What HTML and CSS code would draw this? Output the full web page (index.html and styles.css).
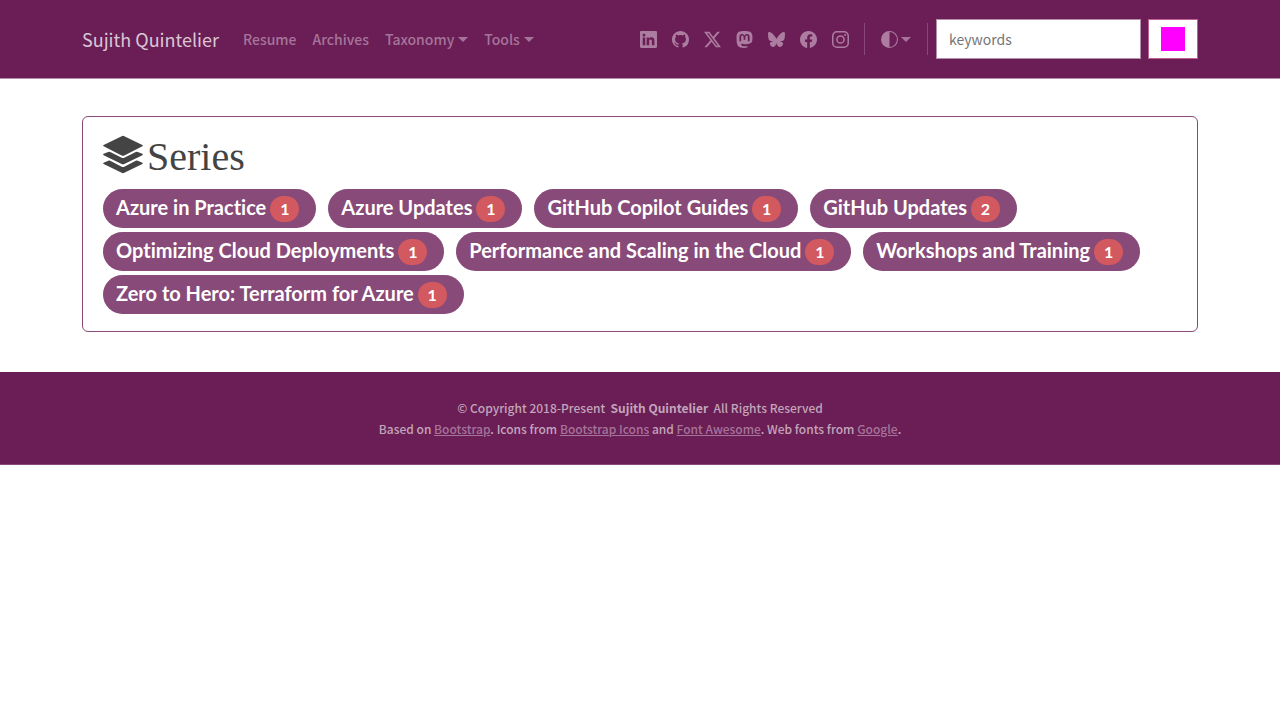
FILE: index.html
```html
<!DOCTYPE html>
<html lang="en">
<head>
<meta charset="utf-8">
<meta name="viewport" content="width=device-width, initial-scale=1">
<title>Series - Sujith Quintelier</title>
<link rel="stylesheet" href="styles.css">
</head>
<body>
<header class="site-header">
  <nav class="container navbar">
    <a class="brand" href="#">Sujith Quintelier</a>
    <ul class="menu">
      <li><a class="nav-link" href="#">Resume</a></li>
      <li><a class="nav-link" href="#">Archives</a></li>
      <li><button class="nav-link caret" type="button">Taxonomy</button></li>
      <li><button class="nav-link caret" type="button">Tools</button></li>
    </ul>
    <div class="social">
      <a href="#" aria-label="LinkedIn"><svg class="icon" viewBox="0 0 16 16"><path d="M0 1.146C0 .513.526 0 1.175 0h13.65C15.474 0 16 .513 16 1.146v13.708c0 .633-.526 1.146-1.175 1.146H1.175C.526 16 0 15.487 0 14.854zm4.943 12.248V6.169H2.542v7.225zm-1.2-8.212c.837 0 1.358-.554 1.358-1.248-.015-.709-.52-1.248-1.342-1.248S2.4 3.226 2.4 3.934c0 .694.521 1.248 1.327 1.248zm4.908 8.212V9.359c0-.216.016-.432.08-.586.173-.431.568-.878 1.232-.878.869 0 1.216.662 1.216 1.634v3.865h2.401V9.25c0-2.22-1.184-3.252-2.764-3.252-1.274 0-1.845.7-2.165 1.193v.025h-.016l.016-.025V6.169h-2.4c.03.678 0 7.225 0 7.225z"/></svg></a>
      <a href="#" aria-label="GitHub"><svg class="icon" viewBox="0 0 16 16"><path d="M8 0C3.58 0 0 3.58 0 8c0 3.54 2.29 6.53 5.47 7.59.4.07.55-.17.55-.38 0-.19-.01-.82-.01-1.49-2.01.37-2.53-.49-2.69-.94-.09-.23-.48-.94-.82-1.13-.28-.15-.68-.52-.01-.53.63-.01 1.08.58 1.23.82.72 1.21 1.87.87 2.33.66.07-.52.28-.87.51-1.07-1.78-.2-3.64-.89-3.64-3.95 0-.87.31-1.59.82-2.15-.08-.2-.36-1.02.08-2.12 0 0 .67-.21 2.2.82.64-.18 1.32-.27 2-.27s1.36.09 2 .27c1.53-1.04 2.2-.82 2.2-.82.44 1.1.16 1.92.08 2.12.51.56.82 1.27.82 2.15 0 3.07-1.87 3.75-3.65 3.95.29.25.54.73.54 1.48 0 1.07-.01 1.93-.01 2.2 0 .21.15.46.55.38A8.01 8.01 0 0 0 16 8c0-4.42-3.58-8-8-8"/></svg></a>
      <a href="#" aria-label="X"><svg class="icon" viewBox="0 0 16 16"><path d="M12.6.75h2.454l-5.36 6.142L16 15.25h-4.937l-3.867-5.07-4.425 5.07H.316l5.733-6.57L0 .75h5.063l3.495 4.633L12.601.75Zm-.86 13.028h1.36L4.323 2.145H2.865z"/></svg></a>
      <a href="#" aria-label="Mastodon"><svg class="icon" viewBox="0 0 16 16"><path d="M11.19 12.195c2.016-.24 3.77-1.475 3.99-2.603.348-1.778.32-4.339.32-4.339 0-3.47-2.286-4.488-2.286-4.488C12.062.238 10.083.017 8.027 0h-.05C5.92.017 3.942.238 2.79.765c0 0-2.285 1.017-2.285 4.488l-.002.662c-.004.64-.007 1.35.011 2.091.083 3.394.626 6.74 3.78 7.57 1.454.383 2.703.463 3.709.408 1.823-.1 2.847-.647 2.847-.647l-.06-1.317s-1.303.41-2.767.36c-1.45-.05-2.98-.156-3.215-1.928a4 4 0 0 1-.033-.496s1.424.346 3.228.428c1.103.05 2.137-.064 3.188-.189zm1.613-2.47H11.13v-4.08c0-.859-.364-1.295-1.091-1.295-.804 0-1.207.517-1.207 1.541v2.233H7.168V5.89c0-1.024-.403-1.541-1.207-1.541-.727 0-1.091.436-1.091 1.296v4.079H3.197V5.522q0-1.288.66-2.046c.456-.505 1.052-.764 1.793-.764.856 0 1.504.328 1.933.983L8 4.39l.417-.695c.429-.655 1.077-.983 1.934-.983.74 0 1.336.259 1.791.764q.662.757.661 2.046z"/></svg></a>
      <a href="#" aria-label="Bluesky"><svg class="icon" viewBox="0 0 16 16"><path d="M3.468 1.948C5.303 3.325 7.276 6.118 8 7.616c.725-1.498 2.698-4.29 4.532-5.668C13.855.955 16 .186 16 2.632c0 .489-.28 4.105-.444 4.692-.572 2.04-2.653 2.561-4.504 2.246 3.236.551 4.06 2.375 2.281 4.2-3.376 3.464-4.852-.87-5.23-1.98-.07-.204-.103-.3-.103-.218 0-.081-.033.014-.102.218-.379 1.11-1.855 5.444-5.231 1.98-1.778-1.825-.955-3.65 2.28-4.2-1.85.315-3.932-.205-4.503-2.246C.28 6.737 0 3.12 0 2.632 0 .186 2.145.955 3.468 1.948"/></svg></a>
      <a href="#" aria-label="Facebook"><svg class="icon" viewBox="0 0 16 16"><path d="M16 8.049c0-4.446-3.582-8.05-8-8.05C3.58 0-.002 3.603-.002 8.05c0 4.017 2.926 7.347 6.75 7.951v-5.625h-2.03V8.05H6.75V6.275c0-2.017 1.195-3.131 3.022-3.131.876 0 1.791.157 1.791.157v1.98h-1.009c-.993 0-1.303.621-1.303 1.258v1.51h2.218l-.354 2.326H9.25V16c3.824-.604 6.75-3.934 6.75-7.951"/></svg></a>
      <a href="#" aria-label="Instagram"><svg class="icon" viewBox="0 0 16 16"><path fill-rule="evenodd" d="M4.7 0h6.6A4.7 4.7 0 0 1 16 4.7v6.6a4.7 4.7 0 0 1-4.7 4.7H4.7A4.7 4.7 0 0 1 0 11.3V4.7A4.7 4.7 0 0 1 4.7 0m.1 1.44A3.36 3.36 0 0 0 1.44 4.8v6.4a3.36 3.36 0 0 0 3.36 3.36h6.4a3.36 3.36 0 0 0 3.36-3.36V4.8a3.36 3.36 0 0 0-3.36-3.36zM12.27 2.77a.96.96 0 1 1 0 1.92.96.96 0 0 1 0-1.92M8 3.89a4.11 4.11 0 1 1 0 8.22 4.11 4.11 0 0 1 0-8.22m0 1.44a2.67 2.67 0 1 0 0 5.34 2.67 2.67 0 0 0 0-5.34"/></svg></a>
    </div>
    <span class="divider"></span>
    <button class="nav-link caret theme" type="button" aria-label="Toggle theme"><svg class="icon" viewBox="0 0 16 16"><path d="M8 15A7 7 0 1 0 8 1zm0 1A8 8 0 1 1 8 0a8 8 0 0 1 0 16"/></svg></button>
    <span class="divider"></span>
    <form class="search">
      <input class="search-input" type="search" placeholder="keywords" aria-label="Search keywords">
      <button class="search-button" type="button" aria-label="Search"><span class="swatch"></span></button>
    </form>
  </nav>
</header>
<main class="container content">
  <section class="card">
    <h1 class="title"><svg class="layers" viewBox="0 0 122 116"><path d="M57 2Q61 0 65 2L120 29Q123 31 120 33L65 61Q61 63 57 61L2 33Q-1 31 2 29zM2 56L16 50Q19 49 22 50L57 68Q61 70 65 68L100 50Q103 49 106 50L120 56Q123 58 120 60L65 87Q61 89 57 87L2 60Q-1 58 2 56zM2 83L16 77Q19 76 22 77L57 95Q61 97 65 95L100 77Q103 76 106 77L120 83Q123 85 120 87L65 114Q61 116 57 114L2 87Q-1 85 2 83z"/></svg>Series</h1>
    <div class="tags">
      <a class="tag" href="#">Azure in Practice <span class="badge">1</span></a>
      <a class="tag" href="#">Azure Updates <span class="badge">1</span></a>
      <a class="tag" href="#">GitHub Copilot Guides <span class="badge">1</span></a>
      <a class="tag" href="#">GitHub Updates <span class="badge">2</span></a>
      <a class="tag" href="#">Optimizing Cloud Deployments <span class="badge">1</span></a>
      <a class="tag" href="#">Performance and Scaling in the Cloud <span class="badge">1</span></a>
      <a class="tag" href="#">Workshops and Training <span class="badge">1</span></a>
      <a class="tag" href="#">Zero to Hero: Terraform for Azure <span class="badge">1</span></a>
    </div>
  </section>
</main>
<footer class="site-footer">
  <p>© Copyright 2018-Present &nbsp;<strong>Sujith Quintelier</strong>&nbsp; All Rights Reserved</p>
  <p>Based on <a href="#">Bootstrap</a>. Icons from <a href="#">Bootstrap Icons</a> and <a href="#">Font Awesome</a>. Web fonts from <a href="#">Google</a>.</p>
</footer>
</body>
</html>
```
FILE: styles.css
```css
* { box-sizing: border-box; }
body {
  margin: 0;
  background: #fff;
  color: #444;
  font: 14px/24px "Noto Sans CJK SC", "Noto Sans", sans-serif;
}
a { color: inherit; text-decoration: none; }
button { font: inherit; cursor: pointer; }
.container {
  width: 100%;
  max-width: 1140px;
  margin: 0 auto;
  padding: 0 12px;
}
.site-header {
  background: #6a1e55;
  border-bottom: 1px solid #b58eaa;
  color: #a6749a;
}
.navbar {
  display: flex;
  align-items: center;
  min-height: 78px;
}
.brand {
  margin-right: 16px;
  color: #dac7d5;
  font-size: 18px;
}
.menu {
  display: flex;
  margin: 0 auto 0 0;
  padding: 0;
  list-style: none;
}
.nav-link {
  display: flex;
  align-items: center;
  padding: 8px;
  border: 0;
  background: none;
  color: #a6749a;
  font-weight: 500;
}
.caret::after {
  content: "";
  margin-left: 4px;
  border: 5px solid transparent;
  border-top-color: currentColor;
  border-bottom: 0;
}
.theme::after { margin-left: 3px; }
.social { display: flex; }
.social a { display: flex; padding: 8px 7px 8px 8px; }
.icon {
  display: block;
  width: 17px;
  height: 17px;
  fill: #ac7da0;
}
.divider {
  width: 1px;
  height: 32px;
  margin: 0 8px;
  background: #88497a;
}
.search {
  display: flex;
  gap: 7px;
}
.search-input {
  width: 205px;
  height: 40px;
  padding: 6px 12px;
  border: 1px solid #b58eaa;
  border-radius: 0;
  background: #fff;
  font: inherit;
}
.search-input::placeholder { color: #757575; opacity: 1; }
.search-button {
  padding: 7px 12px;
  border: 1px solid #bf6090;
  background: #fff;
}
.swatch {
  display: block;
  width: 24px;
  height: 24px;
  background: #f0f;
}
.content { padding-top: 37px; padding-bottom: 40px; }
.card {
  padding: 16px 20px;
  border: 1px solid #884a78;
  border-radius: 6px;
}
.title {
  display: flex;
  gap: 4px;
  margin: 0 0 8px;
  font: 400 40px/48px "Liberation Serif", serif;
}
.layers {
  width: 40px;
  height: 39px;
  margin-top: 2px;
  fill: #444;
}
.tags {
  display: flex;
  flex-wrap: wrap;
  gap: 4px 12px;
  padding-bottom: 1px;
}
.tag {
  display: flex;
  gap: 4px;
  padding: 6px 17px 6px 13px;
  border-radius: 20px;
  background: #884a78;
  color: #fff;
  font: 700 20px/24px Lato, sans-serif;
  font-variant-ligatures: none;
}
.badge {
  min-width: 29px;
  margin-top: 1px;
  border-radius: 13px;
  background: #d2595f;
  font-size: 16px;
  line-height: 26px;
  text-align: center;
}
.site-footer {
  padding: 25px 12px;
  border-bottom: 1px solid #884a78;
  background: #6a1e55;
  color: #c3a5bb;
  font-size: 12px;
  font-weight: 500;
  line-height: 21px;
  text-align: center;
}
.site-footer p { margin: 0; }
.site-footer a { color: #a6749a; text-decoration: underline; }
```
